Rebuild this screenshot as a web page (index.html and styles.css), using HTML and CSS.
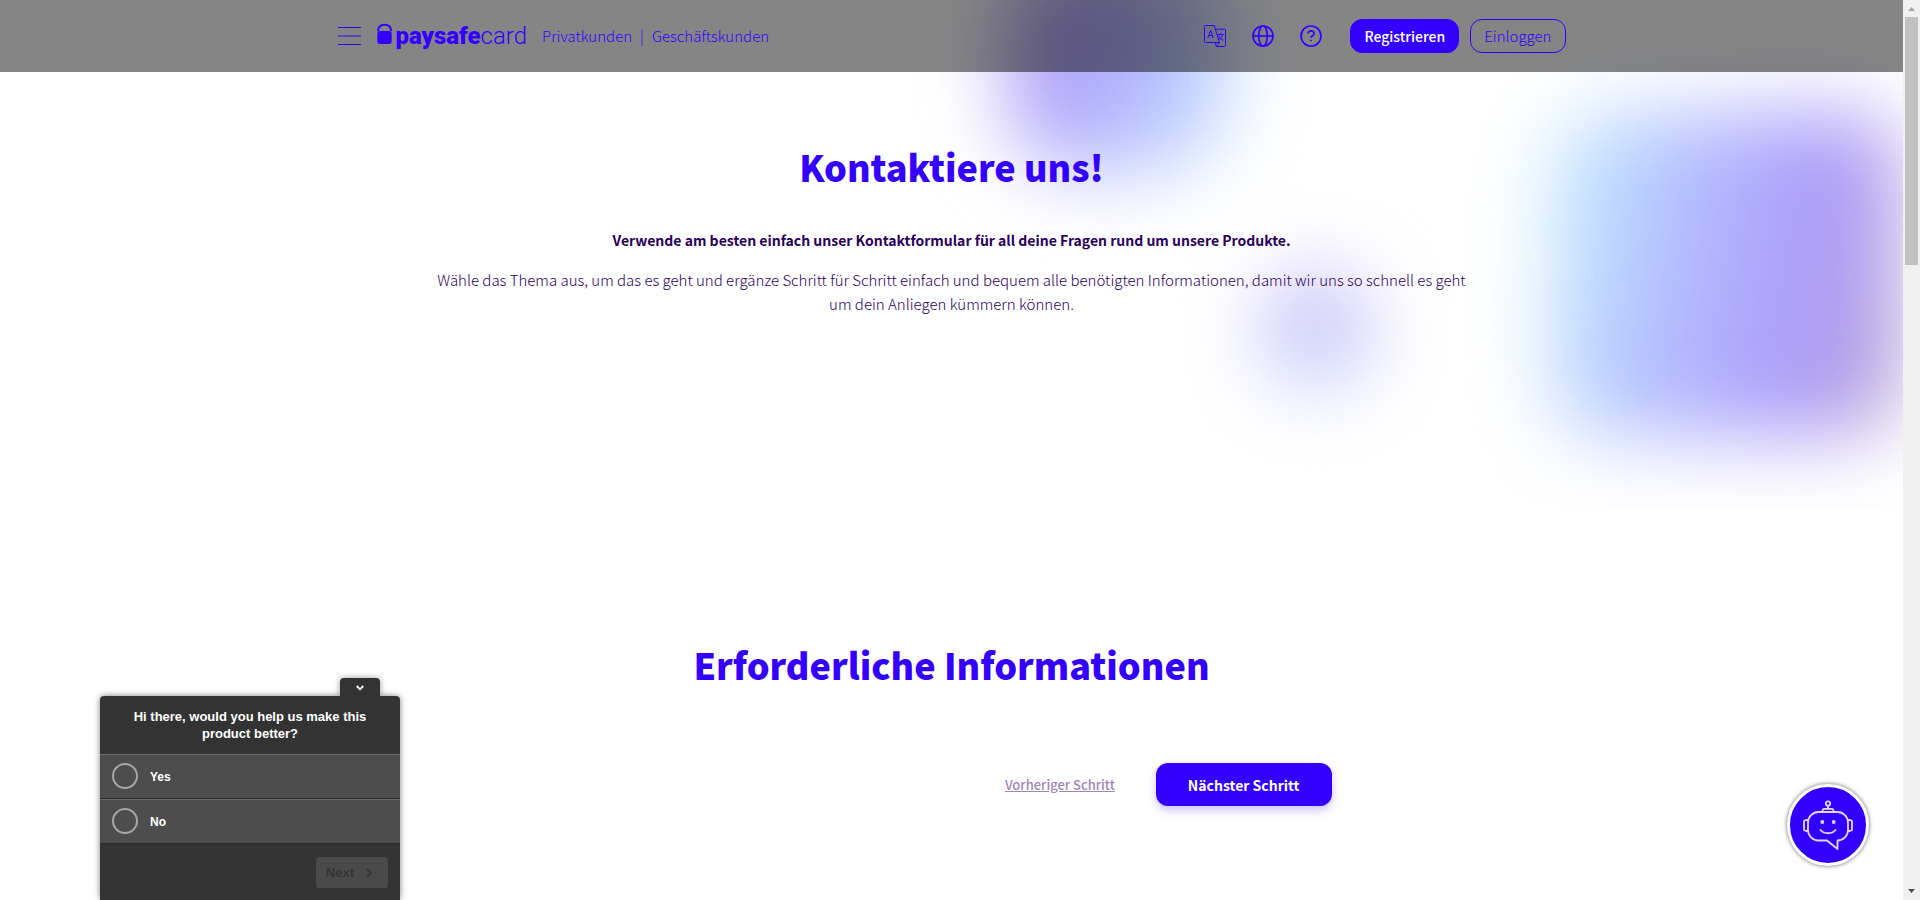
FILE: index.html
```html
<!DOCTYPE html>
<html lang="de">
<head>
<meta charset="utf-8">
<meta name="viewport" content="width=device-width, initial-scale=1">
<title>Kontakt | paysafecard</title>
<link rel="stylesheet" href="styles.css">
</head>
<body>
<div class="page">
  <div class="glow" aria-hidden="true">
    <div class="blob blob-top"></div>
    <div class="blob blob-small"></div>
    <div class="blob blob-large"></div>
  </div>

  <header class="header">
    <div class="header-inner">
      <button class="menu" type="button" aria-label="Menü">
        <svg width="23" height="20" viewBox="0 0 23 20" fill="none" stroke="currentColor"><path d="M0 1.500h23M0 10h23M0 18.500h23"/></svg>
      </button>
      <a class="logo" href="#" aria-label="paysafecard">
        <svg width="15" height="26" viewBox="0 0 15 26"><path d="M1 8.200C1 4 3.500 1.800 7.500 1.800S14 4 14 8.200" fill="none" stroke="currentColor" stroke-width="2"/><rect x=".3" y="8" width="14.400" height="13" rx="3" fill="currentColor"/></svg>
        <span class="wordmark"><b>paysafe</b>card</span>
      </a>
      <nav class="segments">
        <a href="#">Privatkunden</a><span class="bar">|</span><a href="#">Geschäftskunden</a>
      </nav>
      <div class="tools">
        <button class="icon" type="button" aria-label="Sprache">
          <svg width="22" height="22" viewBox="0 0 22 22" fill="none" stroke="currentColor" stroke-linejoin="round"><path d="M11.700 17.500H1.500a1 1 0 0 1-1-1v-15a1 1 0 0 1 1-1h8.700l5.300 17h-3.800zM15.500 17.500l-3.300 3.900-.9-3.900M11.300 4.200h9.200a1 1 0 0 1 1 1v15.300a1 1 0 0 1-1 1h-8.200"/><path d="M3.800 13l2.800-7.500L9.400 13M4.700 10.600h3.800M13.700 9.500h6M16.700 8v1.500M18.700 9.500c-.5 2.300-2 4.200-4 5.500M14.500 10.700c1 2 2.600 3.600 4.800 4.500"/></svg>
        </button>
        <button class="icon" type="button" aria-label="Land">
          <svg width="22" height="22" viewBox="0 0 22 22" fill="none" stroke="currentColor" stroke-width="1.700"><circle cx="11" cy="11" r="10"/><ellipse cx="11" cy="11" rx="4.300" ry="10"/><path d="M1 11h20"/></svg>
        </button>
        <button class="icon" type="button" aria-label="Hilfe">
          <svg width="22" height="22" viewBox="0 0 22 22" fill="none" stroke="currentColor" stroke-width="1.700"><circle cx="11" cy="11" r="10"/><path d="M7.900 8.600c0-1.700 1.300-2.800 3.100-2.800s3.100 1.100 3.100 2.700c0 2.200-3.100 2.300-3.100 4.300"/><circle cx="11" cy="15.500" r=".5" fill="currentColor" stroke-width="1"/></svg>
        </button>
      </div>
      <div class="account">
        <button class="btn btn-solid" type="button">Registrieren</button>
        <button class="btn btn-line" type="button">Einloggen</button>
      </div>
    </div>
  </header>

  <main>
    <section class="intro">
      <h1 class="title">Kontaktiere uns!</h1>
      <p class="lead"><strong>Verwende am besten einfach unser Kontaktformular für all deine Fragen rund um unsere Produkte.</strong></p>
      <p class="lead">Wähle das Thema aus, um das es geht und ergänze Schritt für Schritt einfach und bequem alle benötigten Informationen, damit wir uns so schnell es geht um dein Anliegen kümmern können.</p>
    </section>
    <section class="form">
      <h2 class="title">Erforderliche Informationen</h2>
      <div class="steps">
        <a class="prev" href="#">Vorheriger Schritt</a>
        <button class="next" type="button">Nächster Schritt</button>
      </div>
    </section>
  </main>

  <form class="survey">
    <button class="survey-toggle" type="button" aria-label="Minimise">
      <svg width="8" height="6" viewBox="0 0 8 6" fill="none" stroke="currentColor" stroke-width="1.800"><path d="M.7 1L4 4.300 7.300 1"/></svg>
    </button>
    <div class="survey-box">
      <p class="survey-question">Hi there, would you help us make this product better?</p>
      <label class="survey-option"><input type="radio" name="help"><span>Yes</span></label>
      <label class="survey-option"><input type="radio" name="help"><span>No</span></label>
      <div class="survey-footer">
        <button class="survey-next" type="submit" disabled>Next
          <svg width="6" height="10" viewBox="0 0 6 10" fill="none" stroke="currentColor" stroke-width="1.800"><path d="M.8.800L5 5 .8 9.200"/></svg>
        </button>
      </div>
    </div>
  </form>

  <button class="chat" type="button" aria-label="Chat">
    <svg width="50" height="50" viewBox="0 0 50 50" fill="none" stroke="currentColor" stroke-width="1.800" stroke-linejoin="round" stroke-linecap="round"><circle cx="25" cy="3.500" r="2.200"/><path d="M25 6v3M19.500 12v-1.200a2 2 0 0 1 2-2h7a2 2 0 0 1 2 2V12M34.500 40.500V49L24 40.500H15.500A10.500 10.500 0 0 1 5 30v-7.500A10.500 10.500 0 0 1 15.500 12h19A10.500 10.500 0 0 1 45 22.500V30a10.500 10.500 0 0 1-10.500 10.500M5 20H3l-2 1v9l2 1h2M45 20h2l2 1v9l-2 1h-2M17.500 30c3.500 4.300 11.500 4.300 15 0"/><g fill="currentColor" stroke="none"><circle cx="19.300" cy="22" r="1.900"/><circle cx="30.700" cy="22" r="1.900"/></g></svg>
  </button>
</div>
<div class="scrollbar" aria-hidden="true">
  <svg width="7" height="4" viewBox="0 0 7 4" fill="#a3a3a3"><path d="M3.500 0L7 4H0z"/></svg>
  <div class="track"><div class="thumb"></div></div>
  <svg width="7" height="4" viewBox="0 0 7 4" fill="#505050"><path d="M0 0h7L3.500 4z"/></svg>
</div>
</body>
</html>
```
FILE: styles.css
```css
* { box-sizing: border-box; }

:root {
  --blue: #3300ff;
  --ink: #2a005f;
}

body {
  margin: 0;
  display: flex;
  height: 100vh;
  overflow: hidden;
  background: #fff;
  color: var(--ink);
  font: 300 15px/24px "Noto Sans CJK SC", "Noto Sans", sans-serif;
}

button {
  margin: 0;
  padding: 0;
  border: 0;
  background: none;
  color: inherit;
  font: inherit;
  cursor: pointer;
}

svg { display: block; }
a { color: inherit; text-decoration: none; }

.page {
  position: relative;
  flex: 1;
  min-width: 0;
  overflow: hidden;
}

/* Soft colour shapes behind the intro */
.glow {
  position: absolute;
  top: 0;
  left: 0;
  right: 0;
  height: 508px;
  overflow: hidden;
}

.blob { position: absolute; }

.blob-top {
  left: 53%;
  top: -40px;
  width: 220px;
  height: 210px;
  border-radius: 70px;
  background: linear-gradient(115deg, #ab90ef 10%, #b0a8fb 40%, #b8ccff 75%, #d0efff);
  filter: blur(40px);
}

.blob-small {
  left: 66%;
  top: 265px;
  width: 120px;
  height: 136px;
  border-radius: 50%;
  background: linear-gradient(#d6c8f8, #ccd0fb 60%, #e4ecff);
  filter: blur(36px);
}

.blob-large {
  right: 0;
  top: 112px;
  width: 356px;
  height: 324px;
  border-radius: 60px;
  background: linear-gradient(100deg, #cdf4ff, #b8d0ff 24%, #b0b0fd 48%, #ac9afa 72%, #b3a0e6 86%, #b69cc0);
  filter: blur(40px);
}

/* Header */
.header {
  position: relative;
  background: rgba(0, 0, 0, .48);
  color: var(--blue);
}

.header-inner {
  display: flex;
  align-items: center;
  max-width: 1228px;
  height: 72px;
  margin: 0 auto;
}

.logo {
  display: flex;
  align-items: center;
  gap: 4px;
  margin-left: 16px;
}

.wordmark {
  font: 300 24px/28px Roboto, sans-serif;
}

.wordmark b { font-weight: 900; }

.segments {
  display: flex;
  gap: 8px;
  margin-left: 15px;
}

.tools {
  display: flex;
  gap: 26px;
  margin-left: auto;
}

.account {
  display: flex;
  gap: 11px;
  margin-left: 28px;
}

.btn {
  height: 34px;
  padding: 0 13px;
  border: 1px solid var(--blue);
  border-radius: 12px;
}

.btn-solid {
  background: var(--blue);
  color: #fff;
  font-size: 14px;
  font-weight: 500;
}

/* Content */
main { position: relative; text-align: center; }

.intro {
  max-width: 1040px;
  min-height: 436px;
  margin: 0 auto;
  padding-top: 64px;
}

.title {
  margin: 0;
  color: var(--blue);
  font-family: "Noto Sans CJK SC Black", "Noto Sans CJK SC", sans-serif;
  font-size: 36px;
  font-weight: 900;
  line-height: 60px;
}

.intro .title { margin-bottom: 32px; }

.lead { margin: 0 0 16px; }

.lead strong {
  font-size: 14px;
  font-weight: 700;
}

.form {
  max-width: 760px;
  margin: 0 auto;
  padding-top: 126px;
}

.steps {
  display: flex;
  align-items: center;
  justify-content: flex-end;
  gap: 41px;
  margin-top: 69px;
}

.prev {
  color: #9f85b9;
  font-size: 13px;
  font-weight: 500;
  text-decoration: underline;
}

.next {
  height: 43px;
  padding: 0 32px;
  border-radius: 12px;
  background: var(--blue);
  box-shadow: 0 4px 10px rgba(51, 0, 255, .25);
  color: #fff;
  font-size: 14px;
  font-weight: 700;
}

/* Survey */
.survey {
  position: absolute;
  left: 100px;
  bottom: 0;
  width: 300px;
  color: #fff;
  font: 700 13px/17px "Liberation Sans", sans-serif;
}

.survey-toggle {
  display: flex;
  justify-content: center;
  align-items: center;
  width: 40px;
  height: 18px;
  margin: 0 20px 0 auto;
  padding-top: 2px;
  border-radius: 4px 4px 0 0;
  background: #333;
  box-shadow: 0 0 6px rgba(0, 0, 0, .4);
}

.survey-box {
  position: relative;
  overflow: hidden;
  border-radius: 4px 4px 0 0;
  background: #333;
}

.survey::after {
  content: "";
  position: absolute;
  z-index: -1;
  inset: 18px 0 0;
  border-radius: 4px;
  box-shadow: 0 0 6px rgba(0, 0, 0, .5);
}

.survey-question {
  margin: 0;
  padding: 12px 30px;
  text-align: center;
}

.survey-option {
  display: flex;
  align-items: center;
  gap: 12px;
  height: 45px;
  padding: 0 12px 2px;
  border-top: 1px solid #6b6b6b;
  border-bottom: 1px solid #2b2b2b;
  background: #4d4d4d;
  font-size: 12px;
}

.survey-option span { padding-top: 3px; }

.survey-option input {
  appearance: none;
  width: 26px;
  height: 26px;
  margin: 0;
  border: 2px solid #a6a6a6;
  border-radius: 50%;
}

.survey-footer {
  display: flex;
  justify-content: flex-end;
  padding: 13px 12px 12px;
}

.survey-next {
  display: flex;
  align-items: center;
  gap: 12px;
  height: 31px;
  padding: 0 16px 0 10px;
  border-radius: 3px;
  background: #4a4a4a;
  color: #333;
}

/* Chat launcher */
.chat {
  position: absolute;
  right: 34px;
  bottom: 34px;
  display: grid;
  place-items: center;
  width: 82px;
  height: 82px;
  border: 3px solid #fff;
  border-radius: 50%;
  background: var(--blue);
  box-shadow: 0 0 4px rgba(0, 0, 0, .6);
  color: #e0d9ff;
}

/* Page scrollbar */
.scrollbar {
  display: flex;
  flex-direction: column;
  align-items: center;
  gap: 6px;
  width: 17px;
  padding: 7px 0;
  background: #f0f0f0;
}

.track { flex: 1; }

.thumb {
  width: 13px;
  height: 248px;
  background: #c1c1c1;
}
```
